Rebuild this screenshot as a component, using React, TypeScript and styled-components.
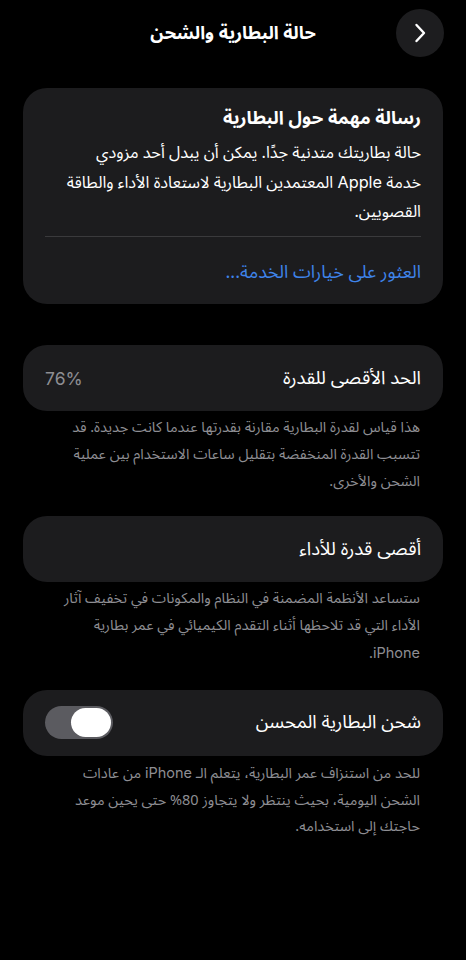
import styled, { createGlobalStyle } from "styled-components";

const GlobalStyle = createGlobalStyle`
  html, body {
    margin: 0;
    padding: 0;
    background: #000;
  }
  body {
    font-family: "Noto Sans Arabic", "DejaVu Sans", "Noto Sans", sans-serif;
    color: #fff;
    -webkit-font-smoothing: antialiased;
  }
  * { box-sizing: border-box; }
`;

const Page = styled.div`
  direction: rtl;
  width: 466px;
  min-height: 960px;
  background: #000;
  padding: 8px 23px 40px;
  display: flex;
  flex-direction: column;
`;

const Header = styled.div`
  position: relative;
  height: 50px;
  display: flex;
  align-items: center;
  justify-content: center;
  margin-bottom: 30px;
`;

const HeaderTitle = styled.h1`
  margin: 0;
  font-size: 18px;
  font-weight: 700;
  color: #fff;
`;

const BackButton = styled.button`
  position: absolute;
  right: -1px;
  top: 1px;
  width: 48px;
  height: 48px;
  border-radius: 50%;
  border: none;
  background: #1d1d1f;
  display: flex;
  align-items: center;
  justify-content: center;
  padding: 0;
  cursor: pointer;
`;

const Card = styled.div`
  background: #1c1c1e;
  border-radius: 24px;
  padding: 0 22px;
`;

const MessageTop = styled.div`
  padding-top: 17px;
`;

const MessageTitle = styled.div`
  font-size: 18.3px;
  font-weight: 700;
  line-height: 27px;
`;

const MessageBody = styled.p`
  margin: 7px 0 0;
  font-size: 16.3px;
  line-height: 29px;
  white-space: nowrap;
  color: #fff;
`;

const Divider = styled.div`
  height: 1px;
  background: #3a3a3c;
  margin-top: 9px;
`;

const LinkRow = styled.div`
  height: 67px;
  padding-top: 3px;
  display: flex;
  align-items: center;
  font-size: 18px;
  color: #3f84ea;
`;

const Row = styled.div`
  height: 66px;
  display: flex;
  align-items: center;
  justify-content: space-between;
  font-size: 18.5px;
`;

const Value = styled.span`
  color: #8e8e93;
  font-family: "Inter", "Liberation Sans", sans-serif;
  font-size: 17.5px;
`;

const Section = styled.div<{ $gap: number }>`
  margin-top: ${(p) => p.$gap}px;
`;

const Footnote = styled.p`
  margin: 4px 0 0;
  padding: 0 23px 0 35px;
  font-size: 14.5px;
  line-height: 26.8px;
  color: #8e8e93;
`;

const Toggle = styled.div<{ $on: boolean }>`
  width: 68px;
  height: 33px;
  border-radius: 16.5px;
  background: ${(p) => (p.$on ? "#34c759" : "#5b5b60")};
  padding: 2px;
  display: flex;
  justify-content: ${(p) => (p.$on ? "flex-end" : "flex-start")};
`;

const Knob = styled.div`
  width: 40px;
  height: 29px;
  border-radius: 14.5px;
  background: #fff;
`;

const Latin = styled.span`
  font-family: "Inter", "Liberation Sans", sans-serif;
`;

export default function App() {
  return (
    <>
      <GlobalStyle />
      <Page>
        <Header>
          <HeaderTitle>حالة البطارية والشحن</HeaderTitle>
          <BackButton aria-label="رجوع">
            <svg width="14" height="20" viewBox="0 0 14 20" fill="none">
              <path
                d="M3.5 2 L11 10 L3.5 18"
                stroke="#fff"
                strokeWidth="2.4"
                strokeLinecap="round"
                strokeLinejoin="round"
              />
            </svg>
          </BackButton>
        </Header>

        <Card>
          <MessageTop>
            <MessageTitle>رسالة مهمة حول البطارية</MessageTitle>
            <MessageBody>
              حالة بطاريتك متدنية جدًا. يمكن أن يبدل أحد مزودي
              <br />
              خدمة <Latin>Apple</Latin> المعتمدين البطارية لاستعادة الأداء والطاقة
              <br />
              القصويين.
            </MessageBody>
          </MessageTop>
          <Divider />
          <LinkRow>العثور على خيارات الخدمة...</LinkRow>
        </Card>

        <Section $gap={41}>
          <Card>
            <Row>
              <span>الحد الأقصى للقدرة</span>
              <Value>76%</Value>
            </Row>
          </Card>
          <Footnote>
            هذا قياس لقدرة البطارية مقارنة بقدرتها عندما كانت جديدة. قد تتسبب القدرة المنخفضة
            بتقليل ساعات الاستخدام بين عملية الشحن والأخرى.
          </Footnote>
        </Section>

        <Section $gap={21}>
          <Card>
            <Row>
              <span>أقصى قدرة للأداء</span>
            </Row>
          </Card>
          <Footnote>
            ستساعد الأنظمة المضمنة في النظام والمكونات في تخفيف آثار الأداء التي قد تلاحظها
            أثناء التقدم الكيميائي في عمر بطارية <Latin>iPhone</Latin>.
          </Footnote>
        </Section>

        <Section $gap={22}>
          <Card>
            <Row>
              <span>شحن البطارية المحسن</span>
              <Toggle $on={false}>
                <Knob />
              </Toggle>
            </Row>
          </Card>
          <Footnote>
            للحد من استنزاف عمر البطارية، يتعلم الـ <Latin>iPhone</Latin> من عادات الشحن
            اليومية، بحيث ينتظر ولا يتجاوز 80% حتى يحين موعد حاجتك إلى استخدامه.
          </Footnote>
        </Section>
      </Page>
    </>
  );
}
